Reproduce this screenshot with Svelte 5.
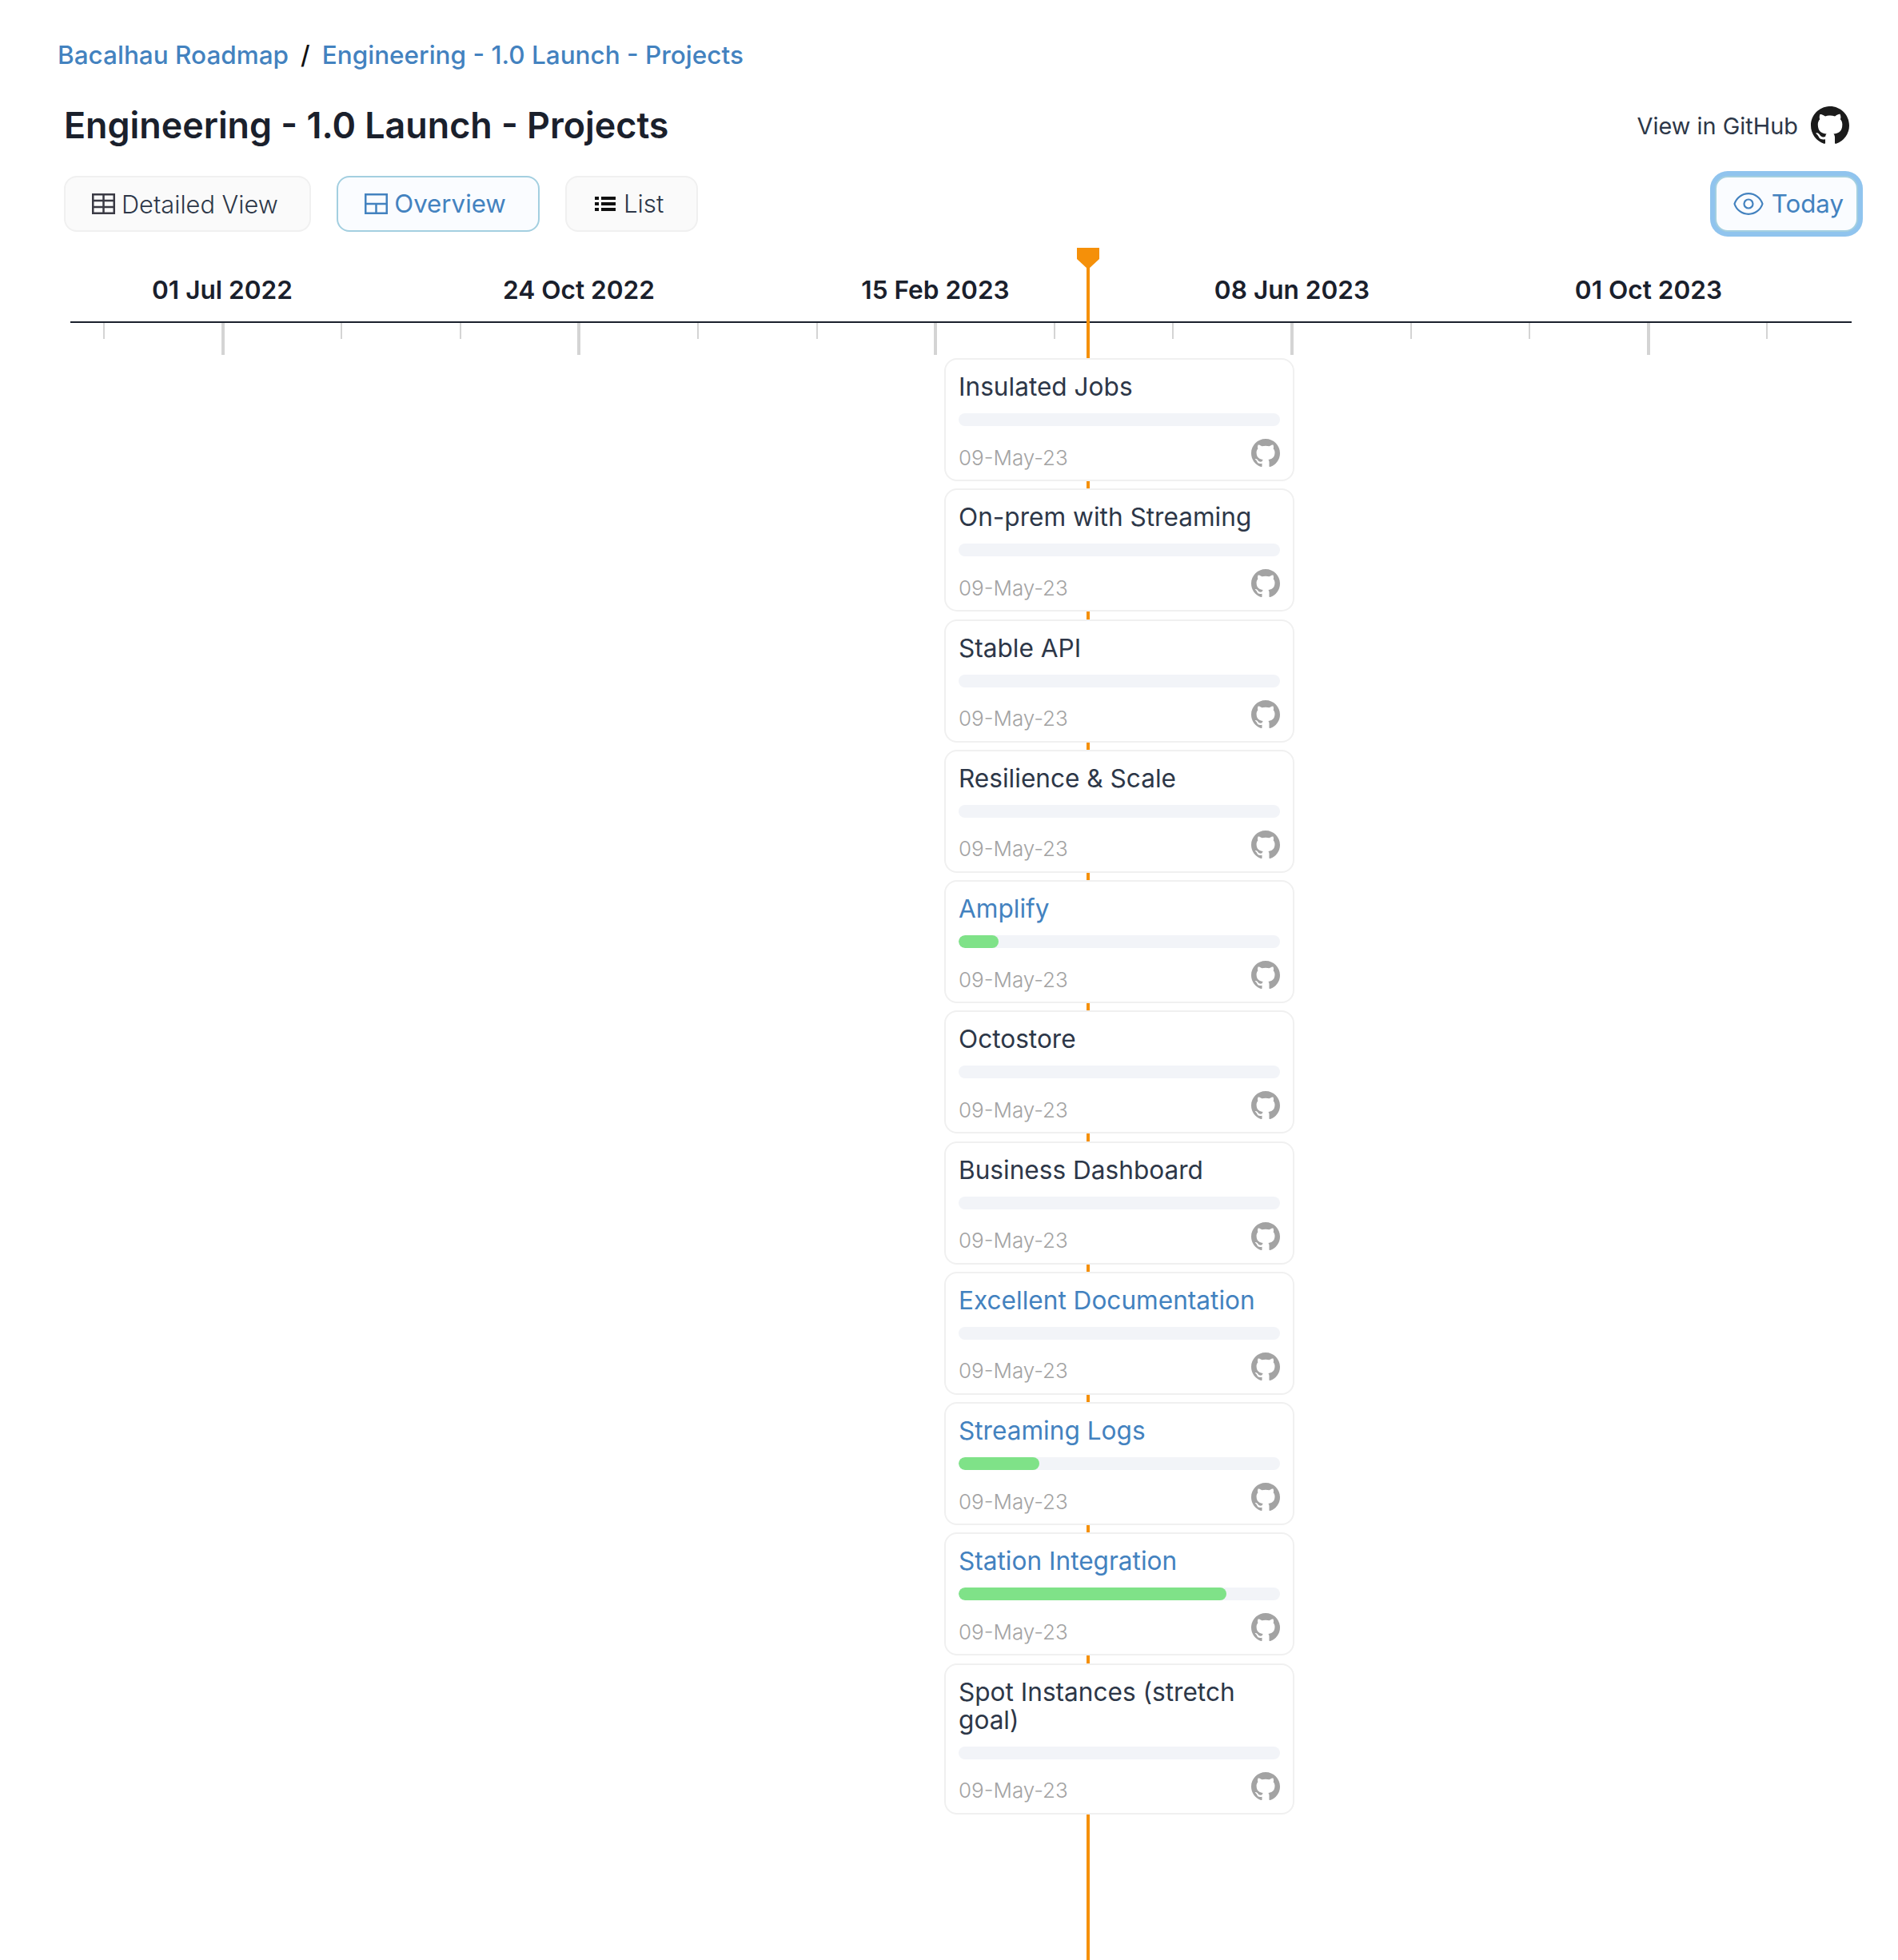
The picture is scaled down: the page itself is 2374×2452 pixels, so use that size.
<script>
  const gh = "M8 0C3.58 0 0 3.58 0 8c0 3.54 2.29 6.53 5.47 7.59.4.07.55-.17.55-.38 0-.19-.01-.82-.01-1.49-2.01.37-2.53-.49-2.69-.94-.09-.23-.48-.94-.82-1.13-.28-.15-.68-.52-.01-.53.63-.01 1.08.58 1.23.82.72 1.21 1.87.87 2.33.66.07-.52.28-.87.51-1.07-1.78-.2-3.64-.89-3.64-3.95 0-.87.31-1.59.82-2.15-.08-.2-.36-1.02.08-2.12 0 0 .67-.21 2.2.82.64-.18 1.32-.27 2-.27.68 0 1.36.09 2 .27 1.53-1.04 2.2-.82 2.2-.82.44 1.1.16 1.92.08 2.12.51.56.82 1.27.82 2.15 0 3.07-1.87 3.75-3.65 3.95.29.25.54.73.54 1.48 0 1.07-.01 1.93-.01 2.2 0 .21.15.46.55.38A8.013 8.013 0 0016 8c0-4.42-3.58-8-8-8z";
  const labels = [
    { t: "01 Jul 2022", x: 278 },
    { t: "24 Oct 2022", x: 724 },
    { t: "15 Feb 2023", x: 1170 },
    { t: "08 Jun 2023", x: 1616 },
    { t: "01 Oct 2023", x: 2062 }
  ];
  const ticks = [];
  for (let i = 0; i < 15; i++) ticks.push({ x: 130 + i * 148.6, major: i % 3 === 1 });
  const cards = [
    { t: "Insulated Jobs", p: 0 },
    { t: "On-prem with Streaming", p: 0 },
    { t: "Stable API", p: 0 },
    { t: "Resilience & Scale", p: 0 },
    { t: "Amplify", p: 12.5, link: true },
    { t: "Octostore", p: 0 },
    { t: "Business Dashboard", p: 0 },
    { t: "Excellent Documentation", p: 0, link: true },
    { t: "Streaming Logs", p: 25, link: true },
    { t: "Station Integration", p: 83.3, link: true },
    { t: "Spot Instances (stretch goal)", p: 0 }
  ];
</script>

<div class="page">
  <nav class="crumbs"><a>Bacalhau Roadmap</a><span class="sep">/</span><a>Engineering - 1.0 Launch - Projects</a></nav>

  <header class="head">
    <h1>Engineering - 1.0 Launch - Projects</h1>
    <div class="gh">
      <span>View in GitHub</span>
      <svg viewBox="0 0 16 16" class="ghicon"><path d={gh} fill="#1b1b1b" /></svg>
    </div>
  </header>

  <div class="bar">
    <button class="btn detailed">
      <svg class="bi" viewBox="0 0 29 26" fill="none" stroke="#3a3a44" stroke-width="2.500"><rect x="1.250" y="1.250" width="26.500" height="23.500" /><path d="M1 9h27M1 17h27M14.500 1v24" /></svg>
      Detailed View
    </button>
    <button class="btn active overview">
      <svg class="bi" viewBox="0 0 29 26" fill="none" stroke="#4382bf" stroke-width="2.500"><rect x="1.250" y="1.250" width="26.500" height="23.500" /><path d="M1 13h27M14.500 13v12" /></svg>
      Overview
    </button>
    <button class="btn listbtn">
      <svg class="bi list" viewBox="0 0 26 20" fill="#111"><rect x="0" y="1" width="5" height="4" /><rect x="0" y="8" width="5" height="4" /><rect x="0" y="15" width="5" height="4" /><rect x="8" y="1" width="18" height="4" /><rect x="8" y="8" width="18" height="4" /><rect x="8" y="15" width="18" height="4" /></svg>
      List
    </button>
    <button class="btn active today">
      <svg class="eye" viewBox="0 0 24 24" fill="none" stroke="#4382bf" stroke-width="1.200"><path d="M15 12a3 3 0 11-6 0 3 3 0 016 0z" /><path d="M2.458 12C3.732 7.943 7.523 5 12 5c4.478 0 8.268 2.943 9.542 7-1.274 4.057-5.064 7-9.542 7-4.477 0-8.268-2.943-9.542-7z" /></svg>
      Today
    </button>
  </div>

  <section class="timeline">
    <div class="axis"></div>
    {#each labels as l}
      <div class="label" style="left:{l.x}px">{l.t}</div>
    {/each}
    {#each ticks as k}
      <div class="tick" class:major={k.major} style="left:{k.x}px"></div>
    {/each}
    <div class="now"></div>
    <svg class="pin" viewBox="0 0 28 27"><path d="M0 0h28v14L14 27 0 14z" fill="#f59009" /></svg>

    <div class="cards">
      {#each cards as c}
        <article class="card">
          <div class="title" class:link={c.link}>{c.t}</div>
          <div class="track">
            {#if c.p}<div class="fill" style="width:{c.p}%"></div>{/if}
          </div>
          <div class="foot">
            <span class="date">09-May-23</span>
            <svg viewBox="0 0 16 16" class="cardicon"><path d={gh} fill="#a3a3a3" /></svg>
          </div>
        </article>
      {/each}
    </div>
  </section>
</div>

<style>
  :global(body) {
    margin: 0;
    background: #fff;
    overflow: hidden;
  }
  .page {
    width: 2374px;
    height: 2452px;
    box-sizing: border-box;
    overflow: hidden;
    font-family: Inter, "Liberation Sans", sans-serif;
    color: #2d3748;
  }
  .crumbs {
    display: flex;
    align-items: center;
    gap: 15px;
    padding: 50px 0 0 72px;
    font-size: 31.5px;
    line-height: 38px;
    font-weight: 500;
    color: #4382bf;
  }
  .sep {
    color: #111;
    font-weight: 500;
  }
  .head {
    display: flex;
    align-items: center;
    justify-content: space-between;
    margin-top: 36px;
    padding: 0 61px 0 80px;
  }
  h1 {
    margin: 0;
    font-size: 44.8px;
    line-height: 66px;
    font-weight: 600;
    color: #1a202c;
  }
  .gh {
    display: flex;
    align-items: center;
    gap: 16px;
    font-size: 28.9px;
    color: #2d3748;
  }
  .ghicon {
    width: 48px;
    height: 48px;
  }
  .bar {
    display: flex;
    align-items: center;
    gap: 32px;
    margin-top: 30px;
    padding: 0 50px 0 80px;
  }
  .btn {
    display: flex;
    align-items: center;
    justify-content: center;
    gap: 8px;
    height: 70px;
    box-sizing: border-box;
    padding: 0 41px 0 33px;
    background: #fafafa;
    border: 2px solid #f0f0f0;
    border-radius: 16px;
    font: 300 31.25px Inter, "Liberation Sans", sans-serif;
    color: #2d3748;
  }
  .btn.active {
    background: #fafcff;
    border-color: #a3cfe0;
    color: #4382bf;
    font-weight: 400;
  }
  .detailed {
    font-size: 30.75px;
    padding-right: 39.5px;
  }
  .overview {
    padding-right: 40px;
  }
  .listbtn {
    padding-left: 35px;
  }
  .today {
    margin-left: auto;
    padding: 0 16px 0 22px;
    box-shadow: 0 0 0 6px #90c4ee;
    gap: 11px;
  }
  .bi {
    width: 29px;
    height: 26px;
  }
  .bi.list {
    width: 26px;
    height: 20px;
    margin-right: 2px;
  }
  .eye {
    width: 44px;
    height: 44px;
    margin: 0 -4px;
  }
  .timeline {
    position: relative;
    margin-top: 20px;
    height: 2142px;
  }
  .axis {
    position: absolute;
    left: 88px;
    width: 2228px;
    top: 92px;
    height: 2px;
    background: #1a202c;
  }
  .label {
    position: absolute;
    top: 33px;
    transform: translateX(-50%);
    font-size: 31.6px;
    line-height: 40px;
    font-weight: 600;
    color: #1a202c;
    white-space: nowrap;
  }
  .tick {
    position: absolute;
    top: 94px;
    width: 2px;
    height: 20px;
    margin-left: -1px;
    background: #d4d4d4;
  }
  .tick.major {
    width: 4px;
    height: 40px;
    margin-left: -2px;
  }
  .now {
    position: absolute;
    left: 1359px;
    top: 20px;
    bottom: 0;
    width: 4px;
    background: #f59009;
  }
  .pin {
    position: absolute;
    left: 1347px;
    top: 0;
    width: 28px;
    height: 27px;
  }
  .cards {
    position: absolute;
    left: 1181px;
    top: 138px;
    width: 438px;
    display: flex;
    flex-direction: column;
    gap: 9.25px;
  }
  .card {
    box-sizing: border-box;
    background: #fff;
    border: 2px solid #f0f0f0;
    border-radius: 16px;
    padding: 16px 16px 15px;
  }
  .title {
    font-size: 31.6px;
    line-height: 35px;
    color: #2d3748;
  }
  .title.link {
    color: #4382bf;
  }
  .track {
    height: 16px;
    margin-top: 16px;
    border-radius: 8px;
    background: #f2f4f8;
    overflow: hidden;
  }
  .fill {
    height: 100%;
    background: #7fe288;
    border-radius: 8px;
  }
  .foot {
    display: flex;
    justify-content: space-between;
    align-items: flex-end;
    margin-top: 16px;
    height: 36px;
  }
  .date {
    font-size: 26px;
    line-height: 34px;
    font-weight: 300;
    color: #a3a3a3;
    margin-bottom: -4.5px;
  }
  .cardicon {
    width: 36px;
    height: 36px;
  }
</style>
